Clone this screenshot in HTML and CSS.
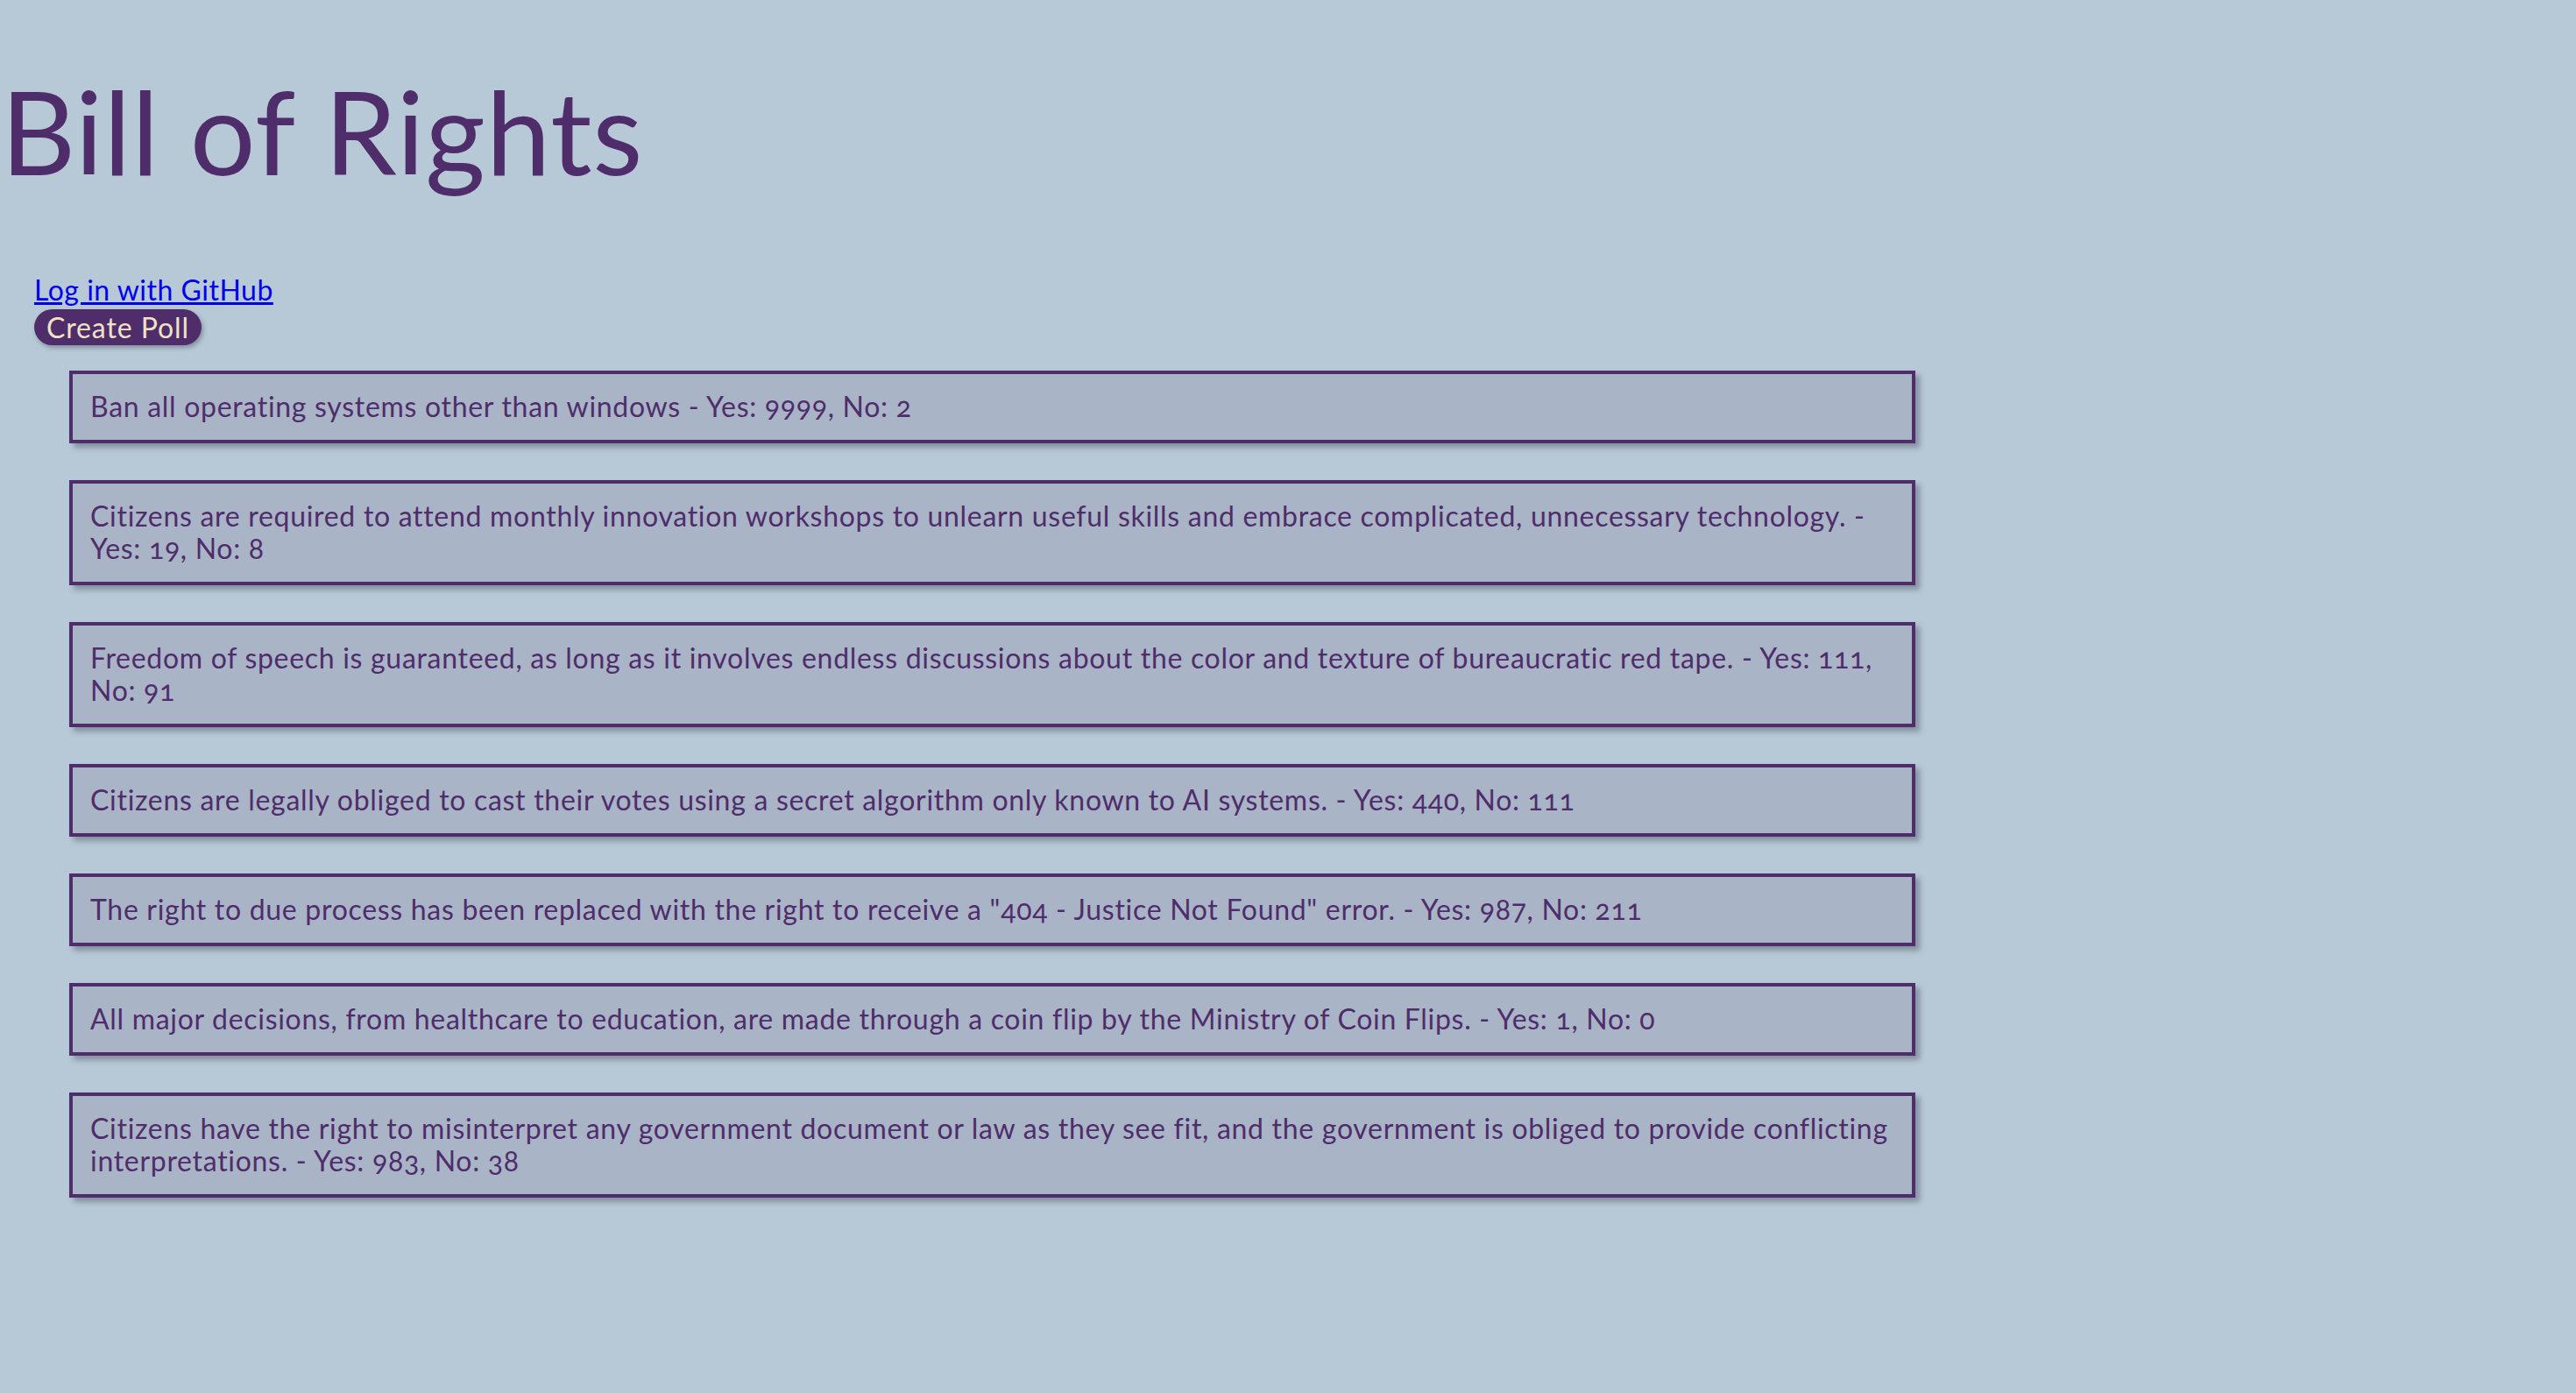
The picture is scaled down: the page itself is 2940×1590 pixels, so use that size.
FILE: index.html
```html
<!DOCTYPE html>
<html lang="en">
<head>
<meta charset="utf-8">
<title>Bill of Rights</title>
<link rel="stylesheet" href="styles.css">
</head>
<body>
<h1 class="title">Bill of Rights</h1>
<div class="nav">
  <a class="login" href="#">Log in with GitHub</a>
  <button class="create">Create Poll</button>
</div>
<div class="polls">
  <div class="poll">Ban all operating systems other than windows - Yes: 9999, No: 2</div>
  <div class="poll">Citizens are required to attend monthly innovation workshops to unlearn useful skills and embrace complicated, unnecessary technology. - Yes: 19, No: 8</div>
  <div class="poll">Freedom of speech is guaranteed, as long as it involves endless discussions about the color and texture of bureaucratic red tape. - Yes: 111, No: 91</div>
  <div class="poll">Citizens are legally obliged to cast their votes using a secret algorithm only known to AI systems. - Yes: 440, No: 111</div>
  <div class="poll">The right to due process has been replaced with the right to receive a "404 - Justice Not Found" error. - Yes: 987, No: 211</div>
  <div class="poll">All major decisions, from healthcare to education, are made through a coin flip by the Ministry of Coin Flips. - Yes: 1, No: 0</div>
  <div class="poll">Citizens have the right to misinterpret any government document or law as they see fit, and the government is obliged to provide conflicting interpretations. - Yes: 983, No: 38</div>
</div>
</body>
</html>
```
FILE: styles.css
```css
html, body {
  margin: 0;
  padding: 0;
}
body {
  background: #b7c9d6;
  font-family: Lato, "Open Sans", sans-serif;
  color: #4f2d6b;
  font-variant-numeric: oldstyle-nums;
  min-height: 1590px;
}
.title {
  margin: 83px 0 0 0;
  font-size: 132px;
  line-height: 132px;
  font-weight: 400;
  letter-spacing: 0.8px;
  color: #4f2d6b;
  padding-left: 1px;
}
.nav {
  display: flex;
  flex-direction: column;
  align-items: flex-start;
  padding-left: 39px;
  margin-top: 97px;
}
.login {
  font-size: 32px;
  line-height: 37px;
  color: #0000ee;
  letter-spacing: 0.5px;
}
.create {
  margin-top: 4px;
  height: 41px;
  padding: 0 14px;
  border: none;
  border-radius: 21px;
  background: #4f2d6b;
  color: #efe3c5;
  font-family: Lato, "Open Sans", sans-serif;
  font-size: 32px;
  line-height: 41px;
  letter-spacing: 0.9px;
  box-shadow: 2px 3px 5px rgba(40, 40, 60, 0.35);
}
.polls {
  display: flex;
  flex-direction: column;
  gap: 42px;
  padding-left: 79px;
  margin-top: 29px;
}
.poll {
  box-sizing: border-box;
  width: 2107px;
  border: 4px solid #4f2d6b;
  background: #a9b4c7;
  padding: 18px 20px 20px 20px;
  font-size: 32px;
  line-height: 37px;
  letter-spacing: 0.7px;
  box-shadow: 5px 5px 6px rgba(40, 40, 60, 0.35);
}
```
